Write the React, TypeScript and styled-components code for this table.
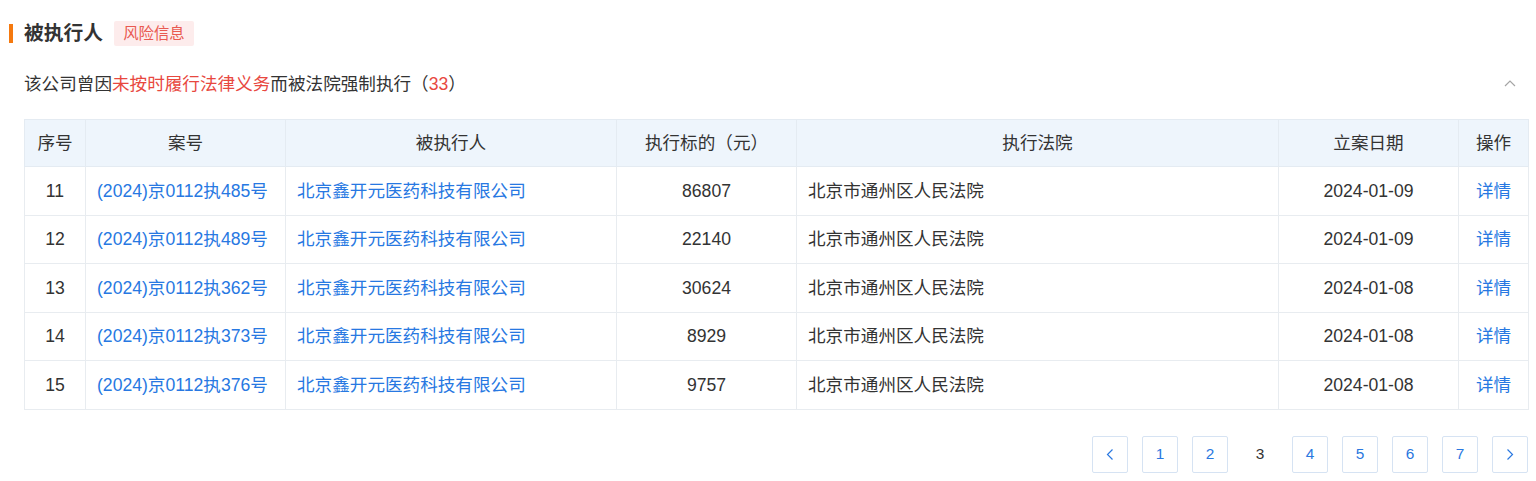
import React from "react";
import styled, { createGlobalStyle } from "styled-components";

const Global = createGlobalStyle`
  html, body { margin: 0; padding: 0; background: #fff; }
  body { font-family: "Liberation Sans", "Noto Sans CJK SC", sans-serif; color: #333; }
`;

const Page = styled.div`
  width: 1536px;
  box-sizing: border-box;
  padding: 21px 8px 8px 24px;
`;

const TitleRow = styled.div`
  display: flex;
  align-items: center;
  height: 25px;
  margin-left: -15px;
`;

const Bar = styled.span`
  width: 4px;
  height: 19px;
  background: #f5790f;
  margin-right: 11px;
`;

const Title = styled.h2`
  margin: 0;
  font-size: 19.8px;
  font-weight: 700;
  color: #333;
  line-height: 25px;
`;

const Badge = styled.span`
  margin-left: 11px;
  padding: 0 9px;
  height: 25px;
  line-height: 25px;
  font-size: 15.4px;
  color: #e95950;
  background: #fdecec;
  border-radius: 2px;
`;

const SubRow = styled.div`
  display: flex;
  align-items: center;
  justify-content: space-between;
  margin-top: 26px;
  height: 24px;
`;

const SubText = styled.p`
  margin: 0;
  font-size: 17.6px;
  line-height: 24px;
  color: #333;
`;

const Red = styled.span`
  color: #e8483f;
`;

const Toggle = styled.span`
  display: flex;
  width: 14px;
  margin-right: 11px;
  color: #a5a5a5;
`;

const Table = styled.table`
  margin-top: 23px;
  width: 1504px;
  border-collapse: collapse;
  table-layout: fixed;
  font-size: 17.6px;
  line-height: 24px;
`;

const Th = styled.th`
  height: 46px;
  padding: 0;
  background: #eef5fc;
  border: 1px solid #e4ebf2;
  font-weight: 400;
  color: #333;
  text-align: center;
  line-height: 24px;
`;

const Td = styled.td<{ $align?: "left" | "center"; $link?: boolean }>`
  height: 47.5px;
  padding: 0 11px;
  border: 1px solid #e8ecf0;
  text-align: ${(p) => p.$align || "center"};
  color: ${(p) => (p.$link ? "#2778e2" : "#333")};
  white-space: nowrap;
  line-height: 24px;
`;

const Pager = styled.div`
  display: flex;
  justify-content: flex-end;
  gap: 14px;
  margin-top: 26px;
`;

const PageBtn = styled.span<{ $current?: boolean }>`
  width: 36px;
  height: 37px;
  box-sizing: border-box;
  display: flex;
  align-items: center;
  justify-content: center;
  font-size: 15.4px;
  color: ${(p) => (p.$current ? "#333" : "#2a78e0")};
  border: 1px solid ${(p) => (p.$current ? "transparent" : "#d6e3f3")};
  border-radius: 2px;
`;

const rows = [
  ["11", "(2024)京0112执485号", "86807", "2024-01-09"],
  ["12", "(2024)京0112执489号", "22140", "2024-01-09"],
  ["13", "(2024)京0112执362号", "30624", "2024-01-08"],
  ["14", "(2024)京0112执373号", "8929", "2024-01-08"],
  ["15", "(2024)京0112执376号", "9757", "2024-01-08"],
];

const widths = [61, 200, 331, 180, 482, 180, 70];

const Chevron = ({ dir }: { dir: "left" | "right" | "up" }) => {
  const d =
    dir === "left" ? "M9.5 2.5 L4.5 7.5 L9.5 12.5" : dir === "right" ? "M4.5 2.5 L9.5 7.5 L4.5 12.5" : "M2 9 L7 4 L12 9";
  return (
    <svg width="14" height="15" viewBox="0 0 14 15" fill="none" stroke="currentColor" strokeWidth="1.2">
      <path d={d} />
    </svg>
  );
};

export default function App() {
  return (
    <>
      <Global />
      <Page>
        <TitleRow>
          <Bar />
          <Title>被执行人</Title>
          <Badge>风险信息</Badge>
        </TitleRow>
        <SubRow>
          <SubText>
            该公司曾因<Red>未按时履行法律义务</Red>而被法院强制执行（<Red>33</Red>）
          </SubText>
          <Toggle>
            <Chevron dir="up" />
          </Toggle>
        </SubRow>
        <Table>
          <colgroup>
            {widths.map((w, i) => (
              <col key={i} style={{ width: w }} />
            ))}
          </colgroup>
          <thead>
            <tr>
              <Th>序号</Th>
              <Th>案号</Th>
              <Th>被执行人</Th>
              <Th>执行标的（元）</Th>
              <Th>执行法院</Th>
              <Th>立案日期</Th>
              <Th>操作</Th>
            </tr>
          </thead>
          <tbody>
            {rows.map((r) => (
              <tr key={r[0]}>
                <Td>{r[0]}</Td>
                <Td $align="left" $link>
                  {r[1]}
                </Td>
                <Td $align="left" $link>
                  北京鑫开元医药科技有限公司
                </Td>
                <Td>{r[2]}</Td>
                <Td $align="left">北京市通州区人民法院</Td>
                <Td>{r[3]}</Td>
                <Td $link>详情</Td>
              </tr>
            ))}
          </tbody>
        </Table>
        <Pager>
          <PageBtn>
            <Chevron dir="left" />
          </PageBtn>
          {["1", "2", "3", "4", "5", "6", "7"].map((n) => (
            <PageBtn key={n} $current={n === "3"}>
              {n}
            </PageBtn>
          ))}
          <PageBtn>
            <Chevron dir="right" />
          </PageBtn>
        </Pager>
      </Page>
    </>
  );
}
